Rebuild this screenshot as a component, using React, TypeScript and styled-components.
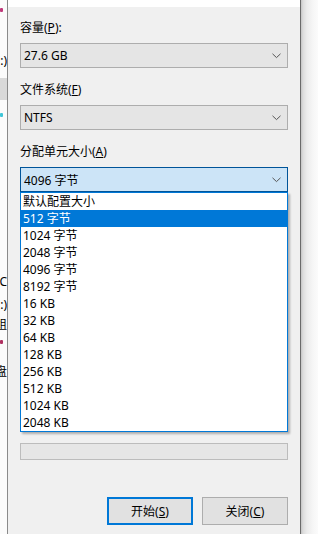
import React from "react";
import styled, { createGlobalStyle } from "styled-components";

const Global = createGlobalStyle`
  html, body { margin: 0; padding: 0; background: #ffffff; overflow: hidden; }
  body { font-family: "Noto Sans", "Noto Sans CJK SC", sans-serif; font-size: 12px; color: #000; }
  * { box-sizing: border-box; }
`;

const Page = styled.div`
  display: flex;
  width: 318px;
  height: 534px;
  overflow: hidden;
`;

const BackStrip = styled.div`
  width: 7px;
  flex: none;
  background: #fbfbfb;
  display: flex;
  flex-direction: column;
  overflow: hidden;
`;

const Fragment = styled.div<{ $top: number; $h?: number; $color?: string; $bg?: string }>`
  margin-top: ${(p) => p.$top}px;
  height: ${(p) => p.$h ?? 14}px;
  line-height: ${(p) => p.$h ?? 14}px;
  width: 7px;
  display: flex;
  justify-content: flex-end;
  overflow: hidden;
  white-space: nowrap;
  color: ${(p) => p.$color ?? "#000"};
  background: ${(p) => p.$bg ?? "transparent"};
  font-size: 12px;
`;

const Dot = styled.div<{ $top: number; $color: string }>`
  margin-top: ${(p) => p.$top}px;
  width: 3px;
  height: 4px;
  border-radius: 1px;
  background: ${(p) => p.$color};
`;

const Dialog = styled.div`
  width: 294px;
  flex: none;
  display: flex;
  flex-direction: column;
  border-left: 1px solid #8a8a8a;
  border-right: 1px solid #6a6a6a;
  background: #f0f0f0;
`;

const TitleStrip = styled.div`
  height: 7px;
  background: #ffffff;
`;

const Body = styled.div`
  padding: 13px 12px 0 12px;
  display: flex;
  flex-direction: column;
`;

const Field = styled.div<{ $first?: boolean }>`
  display: flex;
  flex-direction: column;
  margin-top: ${(p) => (p.$first ? 0 : 14)}px;
`;

const Label = styled.div`
  height: 16px;
  line-height: 16px;
  margin-bottom: 7px;
  white-space: nowrap;
`;

const ComboWrap = styled.div`
  position: relative;
`;

const Combo = styled.div<{ $open?: boolean }>`
  height: 25px;
  display: flex;
  align-items: center;
  justify-content: space-between;
  padding: 0 6px 0 3px;
  background: ${(p) => (p.$open ? "#cce4f7" : "#e5e5e5")};
  border: 1px solid ${(p) => (p.$open ? "#005499" : "#adadad")};
  white-space: nowrap;
`;

const Chevron = () => (
  <svg width="9" height="6" viewBox="0 0 9 6">
    <polyline points="0.5,0.8 4.5,4.6 8.5,0.8" fill="none" stroke="#555" strokeWidth="1" />
  </svg>
);

const List = styled.div`
  position: absolute;
  left: 0;
  right: 0;
  top: 100%;
  background: #ffffff;
  border: 1px solid #0078d7;
  box-shadow: 2px 2px 2px rgba(0, 0, 0, 0.28);
  z-index: 2;
`;

const Item = styled.div<{ $selected?: boolean }>`
  height: 17px;
  line-height: 17px;
  padding-left: 2px;
  white-space: nowrap;
  background: ${(p) => (p.$selected ? "#0078d7" : "transparent")};
  color: ${(p) => (p.$selected ? "#ffffff" : "#000")};
`;

const Progress = styled.div`
  margin-top: 251px;
  height: 17px;
  background: #e6e6e6;
  border: 1px solid #bcbcbc;
`;

const ButtonRow = styled.div`
  margin-top: 37px;
  display: flex;
  justify-content: flex-end;
  gap: 9px;
`;

const Button = styled.div<{ $default?: boolean }>`
  width: 86px;
  height: 28px;
  display: flex;
  align-items: center;
  justify-content: center;
  background: #e1e1e1;
  border: ${(p) => (p.$default ? "2px solid #0078d7" : "1px solid #adadad")};
  white-space: nowrap;
`;

const Shadow = styled.div`
  flex: 1;
  background: linear-gradient(to right, #c4c4c4 0px, #dcdcdc 2px, #ececec 6px, #f6f6f6 12px, #fbfbfb 17px);
`;

const items = [
  "默认配置大小",
  "512 字节",
  "1024 字节",
  "2048 字节",
  "4096 字节",
  "8192 字节",
  "16 KB",
  "32 KB",
  "64 KB",
  "128 KB",
  "256 KB",
  "512 KB",
  "1024 KB",
  "2048 KB",
];

export default function App() {
  return (
    <>
      <Global />
      <Page>
        <BackStrip>
          <Dot $top={8} $color="#c0397a" />
          <Fragment $top={42}>(C:)</Fragment>
          <Fragment $top={10} $h={22} $bg="#d9d9d9" />
          <Dot $top={13} $color="#3fc6d8" />
          <Fragment $top={158}>(C</Fragment>
          <Fragment $top={9}>(C:)</Fragment>
          <Fragment $top={6}>卷组</Fragment>
          <Dot $top={8} $color="#b03060" />
          <Fragment $top={21}>磁盘</Fragment>
        </BackStrip>
        <Dialog>
          <TitleStrip />
          <Body>
            <Field $first>
              <Label>
                容量(<u>P</u>):
              </Label>
              <Combo>
                <span>27.6 GB</span>
                <Chevron />
              </Combo>
            </Field>
            <Field>
              <Label>
                文件系统(<u>F</u>)
              </Label>
              <Combo>
                <span>NTFS</span>
                <Chevron />
              </Combo>
            </Field>
            <Field>
              <Label>
                分配单元大小(<u>A</u>)
              </Label>
              <ComboWrap>
                <Combo $open>
                  <span>4096 字节</span>
                  <Chevron />
                </Combo>
                <List>
                  {items.map((t, i) => (
                    <Item key={t} $selected={i === 1}>
                      {t}
                    </Item>
                  ))}
                </List>
              </ComboWrap>
            </Field>
            <Progress />
            <ButtonRow>
              <Button $default>
                开始(<u>S</u>)
              </Button>
              <Button>
                关闭(<u>C</u>)
              </Button>
            </ButtonRow>
          </Body>
        </Dialog>
        <Shadow />
      </Page>
    </>
  );
}
